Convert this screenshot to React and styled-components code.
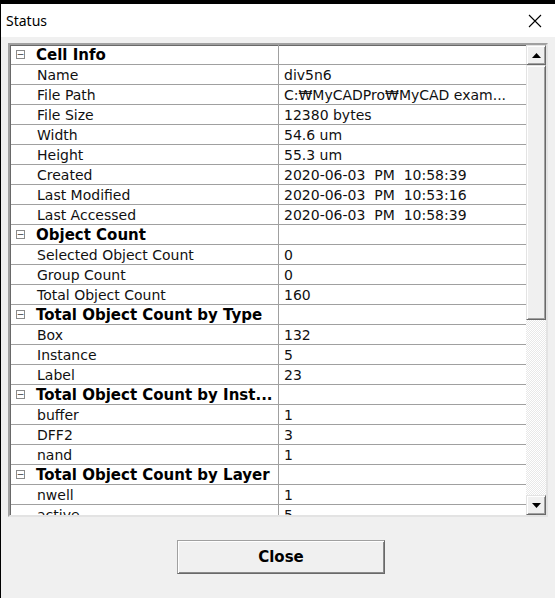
import React from 'react';
import styled, { createGlobalStyle } from 'styled-components';

const sections = [
  {
    title: 'Cell Info',
    rows: [
      ['Name', 'div5n6'],
      ['File Path', 'C:₩MyCADPro₩MyCAD exam...'],
      ['File Size', '12380 bytes'],
      ['Width', '54.6 um'],
      ['Height', '55.3 um'],
      ['Created', '2020-06-03  PM  10:58:39'],
      ['Last Modified', '2020-06-03  PM  10:53:16'],
      ['Last Accessed', '2020-06-03  PM  10:58:39'],
    ],
  },
  {
    title: 'Object Count',
    rows: [
      ['Selected Object Count', '0'],
      ['Group Count', '0'],
      ['Total Object Count', '160'],
    ],
  },
  {
    title: 'Total Object Count by Type',
    rows: [
      ['Box', '132'],
      ['Instance', '5'],
      ['Label', '23'],
    ],
  },
  {
    title: 'Total Object Count by Inst...',
    rows: [
      ['buffer', '1'],
      ['DFF2', '3'],
      ['nand', '1'],
    ],
  },
  {
    title: 'Total Object Count by Layer',
    rows: [
      ['nwell', '1'],
      ['active', '5'],
    ],
  },
];

const App = () => {
  return <>
    <GlobalStyle />
    <Window>
      <TitleBar>
        <span>Status</span>
        <svg width="14" height="14" viewBox="0 0 14 14">
          <path d="M1 1 L13 13 M13 1 L1 13" stroke="#000" strokeWidth="1.1" />
        </svg>
      </TitleBar>
      <Body>
        <List>
          <Grid>
            {sections.map(s => (
              <React.Fragment key={s.title}>
                <Cell>
                  <Head>
                    <Toggle>−</Toggle>
                    {s.title}
                  </Head>
                </Cell>
                <Value />
                {s.rows.map(([k, v]) => (
                  <React.Fragment key={k}>
                    <Cell><Label>{k}</Label></Cell>
                    <Value>{v}</Value>
                  </React.Fragment>
                ))}
              </React.Fragment>
            ))}
          </Grid>
          <ScrollBar>
            <Arrow>
              <svg width="9" height="5" viewBox="0 0 9 5"><path d="M4.5 0 L9 5 L0 5 Z" fill="#000" /></svg>
            </Arrow>
            <Track>
              <Thumb />
            </Track>
            <Arrow>
              <svg width="9" height="5" viewBox="0 0 9 5"><path d="M0 0 L9 0 L4.5 5 Z" fill="#000" /></svg>
            </Arrow>
          </ScrollBar>
        </List>
        <ButtonRow>
          <CloseButton>Close</CloseButton>
        </ButtonRow>
      </Body>
    </Window>
  </>;
};

export default App;

const GlobalStyle = createGlobalStyle`
  html, body {
    margin: 0;
    background: #000;
  }
  * { box-sizing: border-box; }
`;

const Window = styled.div`
    margin: 4px 0 0 1px;
    width: 554px;
    height: 594px;
    display: flex;
    flex-direction: column;
    background: #f0f0f0;
`;

const TitleBar = styled.div`
    height: 33px;
    background: #fff;
    display: flex;
    align-items: center;
    justify-content: space-between;
    padding: 0 13px 0 5px;
    font-family: "Noto Sans", "Open Sans", sans-serif;
    font-size: 14px;
    color: #000;
`;

const Body = styled.div`
    flex: 1;
    padding: 6px 0 0 7px;
`;

const List = styled.div`
    width: 540px;
    height: 474px;
    display: flex;
    background: #fff;
    border: 2px solid;
    border-color: #a0a0a0 #e3e3e3 #e3e3e3 #a0a0a0;
    box-shadow: inset 1px 1px #696969;
`;

const Grid = styled.div`
    flex: 1;
    display: grid;
    grid-template-columns: 268px 1fr;
    grid-auto-rows: 20px;
    align-content: start;
    overflow: hidden;
    font-family: "DejaVu Sans", "Noto Sans CJK KR", sans-serif;
    font-size: 14px;
    color: #111;
    padding-left: 1px;
`;

const Cell = styled.div`
    border-bottom: 1px solid #a0a0a0;
    border-right: 1px solid #a0a0a0;
    display: flex;
    align-items: center;
    white-space: nowrap;
`;

const Head = styled.div`
    display: flex;
    align-items: center;
    padding-left: 5px;
    font-weight: bold;
    font-size: 15px;
    color: #000;
`;

const Toggle = styled.span`
    width: 9px;
    height: 9px;
    border: 1px solid #8a8a8a;
    margin-right: 11px;
    display: flex;
    align-items: center;
    justify-content: center;
    font-size: 9px;
    line-height: 1;
    font-weight: normal;
    color: #333;
`;

const Label = styled.span`
    padding-left: 26px;
`;

const Value = styled.div`
    border-bottom: 1px solid #a0a0a0;
    display: flex;
    align-items: center;
    padding-left: 5px;
    white-space: pre;
    overflow: hidden;
`;

const ScrollBar = styled.div`
    width: 20px;
    display: flex;
    flex-direction: column;
`;

const Arrow = styled.div`
    height: 20px;
    display: flex;
    align-items: center;
    justify-content: center;
    background: #f0f0f0;
    border: 1px solid;
    border-color: #e3e3e3 #696969 #696969 #e3e3e3;
    box-shadow: inset 1px 1px #fff, inset -1px -1px #a0a0a0;
`;

const Track = styled.div`
    flex: 1;
    background: repeating-conic-gradient(#fff 0 25%, #e8e8e8 0 50%) 0 0 / 2px 2px;
`;

const Thumb = styled.div`
    height: 255px;
    background: #f0f0f0;
    border: 1px solid;
    border-color: #e3e3e3 #696969 #696969 #e3e3e3;
    box-shadow: inset 1px 1px #fff, inset -1px -1px #a0a0a0;
`;

const ButtonRow = styled.div`
    display: flex;
    justify-content: center;
    margin-top: 23px;
    padding-right: 1px;
`;

const CloseButton = styled.button`
    width: 208px;
    height: 34px;
    background: #f0f0f0;
    border: 1px solid;
    border-color: #a0a0a0 #696969 #696969 #a0a0a0;
    box-shadow: inset 1px 1px #fff, inset -1px -1px #8a8a8a;
    font-family: "DejaVu Sans", sans-serif;
    font-weight: bold;
    font-size: 15px;
    color: #000;
    padding: 0;
`;
